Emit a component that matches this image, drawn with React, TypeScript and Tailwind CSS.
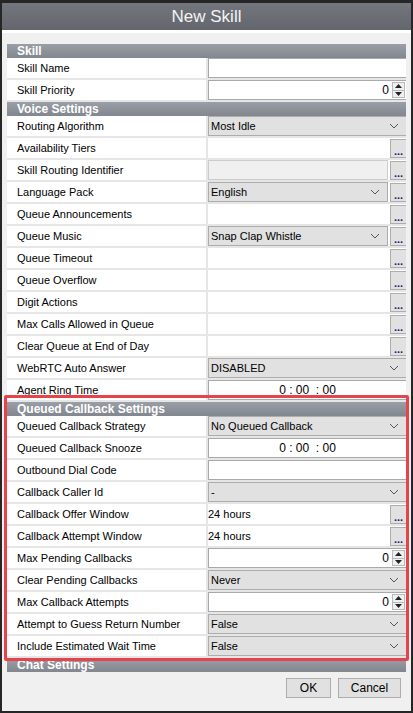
import React from "react";

type Kind =
  | { type: "text" }
  | { type: "spin"; value: string }
  | { type: "select"; value: string; more?: boolean }
  | { type: "more"; value?: string }
  | { type: "disabledMore" }
  | { type: "time" }
  | { type: "empty" };

interface Row {
  label: string;
  kind: Kind;
}

interface Section {
  title: string;
  rows: Row[];
}

const sections: Section[] = [
  {
    title: "Skill",
    rows: [
      { label: "Skill Name", kind: { type: "text" } },
      { label: "Skill Priority", kind: { type: "spin", value: "0" } },
    ],
  },
  {
    title: "Voice Settings",
    rows: [
      { label: "Routing Algorithm", kind: { type: "select", value: "Most Idle" } },
      { label: "Availability Tiers", kind: { type: "more" } },
      { label: "Skill Routing Identifier", kind: { type: "disabledMore" } },
      { label: "Language Pack", kind: { type: "select", value: "English", more: true } },
      { label: "Queue Announcements", kind: { type: "more" } },
      { label: "Queue Music", kind: { type: "select", value: "Snap Clap Whistle", more: true } },
      { label: "Queue Timeout", kind: { type: "more" } },
      { label: "Queue Overflow", kind: { type: "more" } },
      { label: "Digit Actions", kind: { type: "more" } },
      { label: "Max Calls Allowed in Queue", kind: { type: "more" } },
      { label: "Clear Queue at End of Day", kind: { type: "more" } },
      { label: "WebRTC Auto Answer", kind: { type: "select", value: "DISABLED" } },
      { label: "Agent Ring Time", kind: { type: "time" } },
    ],
  },
  {
    title: "Queued Callback Settings",
    rows: [
      { label: "Queued Callback Strategy", kind: { type: "select", value: "No Queued Callback" } },
      { label: "Queued Callback Snooze", kind: { type: "time" } },
      { label: "Outbound Dial Code", kind: { type: "text" } },
      { label: "Callback Caller Id", kind: { type: "select", value: "-" } },
      { label: "Callback Offer Window", kind: { type: "more", value: "24 hours" } },
      { label: "Callback Attempt Window", kind: { type: "more", value: "24 hours" } },
      { label: "Max Pending Callbacks", kind: { type: "spin", value: "0" } },
      { label: "Clear Pending Callbacks", kind: { type: "select", value: "Never" } },
      { label: "Max Callback Attempts", kind: { type: "spin", value: "0" } },
      { label: "Attempt to Guess Return Number", kind: { type: "select", value: "False" } },
      { label: "Include Estimated Wait Time", kind: { type: "select", value: "False" } },
    ],
  },
  { title: "Chat Settings", rows: [] },
];

function Chevron() {
  return (
    <svg width="10" height="6" viewBox="0 0 10 6" className="shrink-0">
      <path d="M1 1 L5 5 L9 1" fill="none" stroke="#555" strokeWidth="1" />
    </svg>
  );
}

function MoreButton() {
  return (
    <div className="ml-[2px] flex h-[19px] w-[17px] shrink-0 items-end justify-center border border-[#adadad] bg-[#e1e1e1] pb-[2px] text-[11px] leading-[8px] font-bold text-[#1a1a6a]">
      ...
    </div>
  );
}

function Spinner() {
  return (
    <div className="flex h-[16px] w-[13px] flex-col border border-[#b8b8b8] bg-[#f0f0f0]">
      <div className="flex flex-1 items-center justify-center border-b border-[#b8b8b8]">
        <svg width="7" height="4" viewBox="0 0 7 4">
          <path d="M0 4 L3.5 0 L7 4 Z" fill="#222" />
        </svg>
      </div>
      <div className="flex flex-1 items-center justify-center">
        <svg width="7" height="4" viewBox="0 0 7 4">
          <path d="M0 0 L3.5 4 L7 0 Z" fill="#222" />
        </svg>
      </div>
    </div>
  );
}

function Value({ kind }: { kind: Kind }) {
  switch (kind.type) {
    case "text":
      return <div className="h-[20px] w-full border border-[#a9a9a9] bg-white" />;
    case "spin":
      return (
        <div className="flex h-[20px] w-full items-center justify-end gap-[3px] border border-[#a9a9a9] bg-white pr-[1px]">
          <span className="text-[12px]">{kind.value}</span>
          <Spinner />
        </div>
      );
    case "time":
      return (
        <div className="flex h-[20px] w-full items-center justify-center border border-[#a9a9a9] bg-white">
          <span className="whitespace-pre text-[12px]">0 : 00  : 00</span>
        </div>
      );
    case "select":
      return (
        <div className="flex h-[20px] w-full items-center">
          <div className="flex h-[20px] flex-1 items-center justify-between border border-[#adadad] bg-[#e1e1e1] pr-[7px] pl-[2px]">
            <span>{kind.value}</span>
            <Chevron />
          </div>
          {kind.more && <MoreButton />}
        </div>
      );
    case "more":
      return (
        <div className="flex h-[20px] w-full items-center bg-white">
          <span className="flex-1">{kind.value}</span>
          <MoreButton />
        </div>
      );
    case "disabledMore":
      return (
        <div className="flex h-[20px] w-full items-center bg-white">
          <div className="h-[20px] flex-1 border border-[#cccccc] bg-[#f0f0f0]" />
          <MoreButton />
        </div>
      );
    default:
      return null;
  }
}

function SectionHeader({ title }: { title: string }) {
  return (
    <div className="flex h-[14px] items-center bg-gradient-to-b from-[#9a9ea6] to-[#82868f] pl-[10px] text-[12px] leading-none font-bold text-white">
      {title}
    </div>
  );
}

export default function App() {
  return (
    <div
      className="relative h-[713px] w-[413px] overflow-hidden bg-[#262626] pt-[3px] pl-[2px] text-[11px] text-black"
      style={{ fontFamily: '"Liberation Sans", Arial, sans-serif' }}
    >
      <div className="flex h-[708px] w-[409px] flex-col bg-[#f0f0f0]">
        <div className="flex h-[27px] shrink-0 items-center justify-center bg-gradient-to-b from-[#73767d] to-[#63666d] text-[17px] text-[#f4f4f4]">
          New Skill
        </div>
        <div className="h-[3px] shrink-0 bg-white" />
        <div className="mx-[5px] mt-[11px] h-[628px] shrink-0 overflow-hidden bg-[#e6e6e6]">
          {sections.map((section) => (
            <div key={section.title}>
              <SectionHeader title={section.title} />
              {section.rows.map((row) => (
                <div key={row.label} className="grid h-[22px] grid-cols-[199px_199px] gap-x-[2px] pb-[2px]">
                  <div className="flex items-center bg-white pt-[1px] pl-[10px] whitespace-nowrap">{row.label}</div>
                  <div className="flex items-center bg-white">
                    <Value kind={row.kind} />
                  </div>
                </div>
              ))}
            </div>
          ))}
        </div>
        <div className="flex justify-end gap-[7px] pt-[6px] pr-[10px]">
          <button className="h-[20px] w-[45px] border border-[#adadad] bg-[#e1e1e1] text-[12px]">OK</button>
          <button className="h-[20px] w-[63px] border border-[#adadad] bg-[#e1e1e1] text-[12px]">Cancel</button>
        </div>
      </div>
      <div className="pointer-events-none absolute top-[395px] left-[4px] h-[266px] w-[405px] rounded-[2px] border-[3px] border-[#e8434b]" />
    </div>
  );
}
